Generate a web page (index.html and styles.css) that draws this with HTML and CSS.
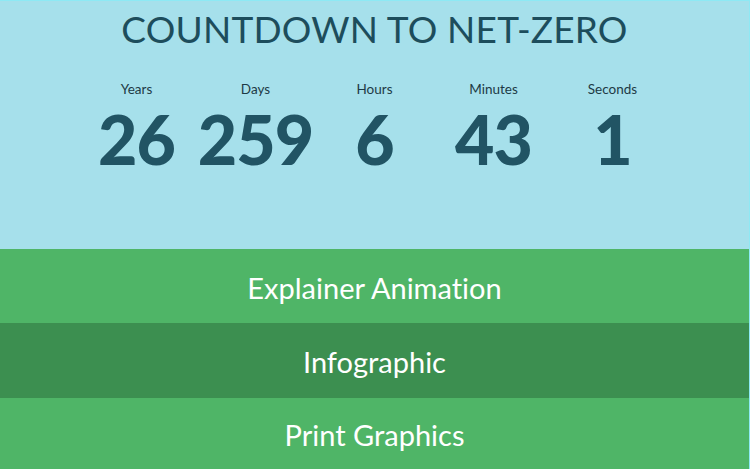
FILE: index.html
```html
<!DOCTYPE html>
<html>
<head>
<meta charset="utf-8">
<link rel="stylesheet" href="styles.css">
</head>
<body>
<div class="page">
  <section class="hero">
    <h1 class="title">COUNTDOWN TO NET-ZERO</h1>
    <div class="counter">
      <div class="unit"><div class="label">Years</div><div class="num">26</div></div>
      <div class="unit"><div class="label">Days</div><div class="num">259</div></div>
      <div class="unit"><div class="label">Hours</div><div class="num">6</div></div>
      <div class="unit"><div class="label">Minutes</div><div class="num">43</div></div>
      <div class="unit"><div class="label">Seconds</div><div class="num">1</div></div>
    </div>
  </section>
  <nav class="links">
    <a class="band">Explainer Animation</a>
    <a class="band dark">Infographic</a>
    <a class="band last">Print Graphics</a>
  </nav>
</div>
</body>
</html>
```
FILE: styles.css
```css
html, body {
  margin: 0;
  padding: 0;
  height: 100%;
  overflow: hidden;
}
body {
  font-family: "Lato", "Noto Sans", sans-serif;
  font-variant-ligatures: none;
  background: #4fb567;
}
.page {
  display: flex;
  flex-direction: column;
  height: 469px;
  border-top: 1px solid #8ee9f4;
  border-right: 1px solid #8ee9f4;
  box-sizing: border-box;
}
.hero {
  background: #a6e0eb;
  height: 248px;
  flex: none;
  display: flex;
  flex-direction: column;
  align-items: center;
}
.title {
  margin: 8px 0 0;
  font-size: 37px;
  font-weight: 400;
  color: #1d4d5c;
  letter-spacing: 0.2px;
  line-height: 40px;
}
.counter {
  display: grid;
  grid-template-columns: repeat(5, 119px);
  margin-top: 32px;
}
.unit {
  display: flex;
  flex-direction: column;
  align-items: center;
}
.label {
  font-size: 13.5px;
  color: #1d3a45;
  line-height: 16px;
}
.num {
  margin-top: 6px;
  font-size: 68px;
  font-weight: 900;
  color: #215464;
  line-height: 72px;
  letter-spacing: -1px;
}
.links {
  display: flex;
  flex-direction: column;
  flex: 1;
}
.band {
  height: 74px;
  flex: none;
  display: flex;
  align-items: center;
  justify-content: center;
  background: #4fb567;
  color: #ffffff;
  font-size: 29px;
  font-weight: 400;
  text-decoration: none;
  padding-top: 2px;
  box-sizing: border-box;
}
.band.dark {
  height: 75px;
  background: #3c8f50;
}
.band.last {
  flex: 1;
  height: auto;
}
```
